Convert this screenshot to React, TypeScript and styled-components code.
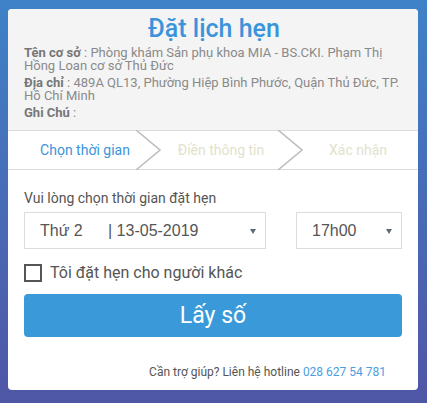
import React from "react";
import styled, { createGlobalStyle } from "styled-components";

const Global = createGlobalStyle`
  html, body { margin: 0; padding: 0; }
  body {
    width: 427px;
    height: 403px;
    overflow: hidden;
    background: linear-gradient(180deg, #3e82c7 0%, #4a67b3 60%, #4f56a6 100%);
    font-family: Roboto, "Liberation Sans", sans-serif;
  }
`;

const Page = styled.div`
  padding: 9px 9px 13px 8px;
  box-sizing: border-box;
  height: 403px;
`;

const Card = styled.div`
  width: 410px;
  height: 381px;
  background: #fff;
  border-radius: 4px;
  overflow: hidden;
  display: flex;
  flex-direction: column;
`;

const Header = styled.div`
  background: #f4f4f4;
  padding: 5px 14px 11px 16px;
`;

const Title = styled.h1`
  margin: 0 0 2px;
  font-size: 25px;
  line-height: 30px;
  font-weight: 500;
  color: #3b94db;
  text-align: center;
`;

const Info = styled.p`
  margin: 0 0 4px;
  font-size: 13px;
  line-height: 13px;
  color: #8a8a8a;
  &:last-child { margin-bottom: 0; }
`;

const InfoLabel = styled.b`
  font-weight: 700;
  color: #777;
`;

const Steps = styled.div`
  position: relative;
  display: grid;
  grid-template-columns: 154px 118px 138px;
  height: 38px;
  border-top: 1px solid #dcdcdc;
  border-bottom: 1px solid #dcdcdc;
  align-items: center;
`;

const Step = styled.div<{ $active?: boolean; $pad?: number }>`
  text-align: center;
  font-size: 14px;
  padding-left: ${(p) => p.$pad ?? 0}px;
  color: ${(p) => (p.$active ? "#3b94db" : "#e2e2cc")};
`;

const Chevron = styled.svg<{ $left: number }>`
  position: absolute;
  top: -1px;
  left: ${(p) => p.$left}px;
`;

const Body = styled.div`
  padding: 19px 16px 0 16px;
  display: flex;
  flex-direction: column;
`;

const Label = styled.div`
  font-size: 14px;
  line-height: 18px;
  color: #555;
  margin-bottom: 5px;
`;

const SelectRow = styled.div`
  display: flex;
  gap: 30px;
`;

const SelectBox = styled.div<{ $w: number }>`
  position: relative;
  width: ${(p) => p.$w}px;
  height: 37px;
  box-sizing: border-box;
  border: 1px solid #dcdcdc;
  display: flex;
  align-items: center;
  padding-left: 15px;
  font-family: "Liberation Sans", Arial, sans-serif;
  font-size: 16px;
  color: #555;
`;

const Day = styled.span`
  width: 68px;
`;

const Arrow = styled.span`
  position: absolute;
  right: 9px;
  top: 16px;
  width: 0;
  height: 0;
  border-left: 3px solid transparent;
  border-right: 3px solid transparent;
  border-top: 5px solid #5f6b75;
`;

const CheckRow = styled.label`
  display: flex;
  align-items: center;
  gap: 8px;
  margin-top: 14px;
  font-size: 16px;
  line-height: 20px;
  color: #555;
`;

const Box = styled.span`
  width: 18px;
  height: 18px;
  box-sizing: border-box;
  border: 2px solid #555;
`;

const Button = styled.button`
  margin-top: 11px;
  height: 43px;
  border: none;
  border-radius: 4px;
  background: #3a9ad9;
  color: #fff;
  font-family: Roboto, sans-serif;
  font-size: 23px;
  cursor: pointer;
`;

const Help = styled.div`
  margin-top: 28px;
  padding-right: 16px;
  text-align: right;
  font-size: 12px;
  color: #555;
`;

const Hotline = styled.span`
  color: #4a9ee0;
`;

const ChevronSvg = ({ left }: { left: number }) => (
  <Chevron $left={left} width="28" height="40" viewBox="0 0 28 40">
    <polyline points="1,0 25,20 1,40" fill="none" stroke="#bdbdbd" strokeWidth="1.6" />
  </Chevron>
);

export default function App() {
  return (
    <>
      <Global />
      <Page>
        <Card>
          <Header>
            <Title>Đặt lịch hẹn</Title>
            <Info>
              <InfoLabel>Tên cơ sở</InfoLabel> : Phòng khám Sản phụ khoa MIA - BS.CKI. Phạm Thị Hồng Loan cơ sở Thủ Đức
            </Info>
            <Info>
              <InfoLabel>Địa chỉ</InfoLabel> : 489A QL13, Phường Hiệp Bình Phước, Quận Thủ Đức, TP. Hồ Chí Minh
            </Info>
            <Info>
              <InfoLabel>Ghi Chú</InfoLabel> :
            </Info>
          </Header>
          <Steps>
            <Step $active>Chọn thời gian</Step>
            <Step>Điền thông tin</Step>
            <Step $pad={18}>Xác nhận</Step>
            <ChevronSvg left={127} />
            <ChevronSvg left={269} />
          </Steps>
          <Body>
            <Label>Vui lòng chọn thời gian đặt hẹn</Label>
            <SelectRow>
              <SelectBox $w={242}>
                <Day>Thứ 2</Day>
                <span>| 13-05-2019</span>
                <Arrow />
              </SelectBox>
              <SelectBox $w={106}>
                <span>17h00</span>
                <Arrow />
              </SelectBox>
            </SelectRow>
            <CheckRow>
              <Box />
              Tôi đặt hẹn cho người khác
            </CheckRow>
            <Button>Lấy số</Button>
            <Help>
              Cần trợ giúp? Liên hệ hotline <Hotline>028 627 54 781</Hotline>
            </Help>
          </Body>
        </Card>
      </Page>
    </>
  );
}
